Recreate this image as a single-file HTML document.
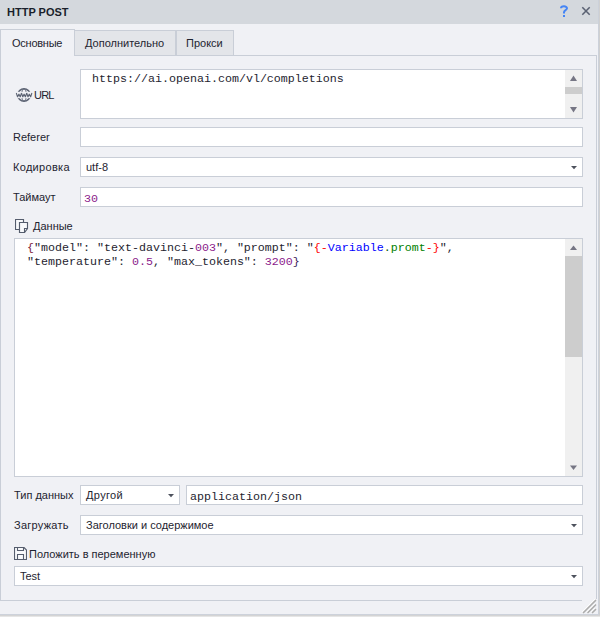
<!DOCTYPE html>
<html><head><meta charset="utf-8">
<style>
*{margin:0;padding:0;box-sizing:border-box}
html,body{width:600px;height:617px;overflow:hidden;background:#f0f1f5}
body{position:relative;font-family:"Liberation Sans",sans-serif;font-size:11px;color:#1e2430}
.a{position:absolute}
.t{position:absolute;white-space:nowrap;line-height:13px;height:13px}
.m{font-family:"Liberation Mono",monospace;font-size:11.67px}
.box{position:absolute;background:#fff;border:1px solid #c9ced7}
#title{left:0;top:0;width:599px;height:24px;background:#d4d8dd}
#rb1{left:598px;top:0;width:1px;height:616px;background:#ccd1da}
#rb2{left:599px;top:0;width:1px;height:617px;background:#d0d0d0}
#bb{left:0;top:614px;width:599px;height:1px;background:#cdd2db}
#bb1{left:0;top:615px;width:600px;height:1px;background:#d4d4d4}
#bb2{left:0;top:616px;width:600px;height:1px;background:#e6e6e6}
.tab{position:absolute;top:30px;height:25px;background:#e3e5e9;border:1px solid #c9ced7;border-bottom:none}
#panel{left:0;top:55px;width:597px;height:546px;border:1px solid #c9ced7;border-right:1px solid #c9ced7}
.sb{position:absolute;background:#f0f0f0}
.thumb{position:absolute;background:#cdcdcd}
.arr{position:absolute;width:0;height:0}
</style></head><body>
<div class="a" id="title"></div>
<div class="t" style="left:7px;top:6px;font-weight:bold;color:#1a1f2b">HTTP POST</div>
<svg class="a" style="left:558px;top:4px" width="12" height="14" viewBox="0 0 12 14"><path d="M3 4.2 C3 1.8 9 1.5 9 4.3 C9 6.1 6 6.2 6 8.2 V9.6" fill="none" stroke="#4585f5" stroke-width="2"/><rect x="5" y="11" width="2" height="2" fill="#4585f5"/></svg>
<svg class="a" style="left:580px;top:5px" width="12" height="12" viewBox="0 0 12 12"><path d="M2.3 2.3 L9.7 9.7 M9.7 2.3 L2.3 9.7" stroke="#5a6172" stroke-width="1.55"/></svg>

<div class="a" id="panel"></div>
<div class="tab" style="left:74px;width:102px"></div>
<div class="tab" style="left:176px;width:58px"></div>
<div class="a" style="left:0;top:29px;width:75px;height:27px;background:#f0f1f5;border:1px solid #c9ced7;border-bottom:none"></div>
<div class="t" style="left:12px;top:37px;letter-spacing:-0.25px">Основные</div>
<div class="t" style="left:85px;top:37px">Дополнительно</div>
<div class="t" style="left:186px;top:37px">Прокси</div>

<!-- URL -->
<svg class="a" style="left:14px;top:86px" width="20" height="18" viewBox="0 0 20 18"><circle cx="10" cy="9" r="6.2" fill="none" stroke="#5f6676" stroke-width="1.5"/><ellipse cx="10" cy="9" rx="2.4" ry="6.2" fill="none" stroke="#5f6676" stroke-width="1"/><rect x="0" y="5.8" width="20" height="6.4" fill="#f0f1f5"/><path d="M2.30 7 L3.60 11 L4.90 8 L6.20 11 L7.50 7 M7.50 7 L8.80 11 L10.10 8 L11.40 11 L12.70 7 M12.70 7 L14.00 11 L15.30 8 L16.60 11 L17.90 7 " fill="none" stroke="#5f6676" stroke-width="1.1" stroke-linejoin="bevel"/></svg>
<div class="t" style="left:34px;top:89px;letter-spacing:-0.8px">URL</div>
<div class="box" style="left:80px;top:69px;width:503px;height:50px"></div>
<div class="t m" style="left:92px;top:73px">https://ai.openai.com/vl/completions</div>
<div class="sb" style="left:565px;top:70px;width:17px;height:48px"></div>
<div class="thumb" style="left:565px;top:87px;width:17px;height:7px"></div>
<svg class="a" style="left:570px;top:75px" width="7" height="6"><path d="M0 6 L3.5 0.5 L7 6Z" fill="#767684"/></svg>
<svg class="a" style="left:570px;top:107px" width="7" height="6"><path d="M0 0 L3.5 5.5 L7 0Z" fill="#767684"/></svg>

<!-- Referer -->
<div class="t" style="left:13px;top:131px">Referer</div>
<div class="box" style="left:80px;top:127px;width:503px;height:20px"></div>

<!-- Кодировка -->
<div class="t" style="left:13px;top:161px;letter-spacing:0.3px">Кодировка</div>
<div class="box" style="left:80px;top:157px;width:503px;height:20px"></div>
<div class="t" style="left:86px;top:161px">utf-8</div>
<svg class="a" style="left:571px;top:166px" width="6" height="4"><path d="M0 0 H6 L3 3.3Z" fill="#4d525d"/></svg>

<!-- Таймаут -->
<div class="t" style="left:13px;top:191px">Таймаут</div>
<div class="box" style="left:80px;top:187px;width:503px;height:20px"></div>
<div class="t m" style="left:84px;top:193px;color:#8b1a8b">30</div>

<!-- Данные -->
<svg class="a" style="left:15px;top:219px" width="14" height="14" viewBox="0 0 14 14"><path d="M0.5 0.5 H8.5 V10.5 H0.5Z" fill="#f8f9fb" stroke="#555d6d" stroke-width="1.15"/><path d="M4.5 3.5 H12.5 V9.5 L9.5 13.5 H4.5Z" fill="#f8f9fb" stroke="#555d6d" stroke-width="1.15"/><path d="M9.5 13.5 V9.5 H12.5" fill="none" stroke="#555d6d" stroke-width="1.1"/></svg>
<div class="t" style="left:33px;top:220px">Данные</div>
<div class="box" style="left:14px;top:238px;width:569px;height:239px"></div>
<div class="t m" style="left:27px;top:241px;line-height:14px;height:28px"><span style="color:#7a1a3a">{</span>"model": "text-davinci-<span style="color:#8b1a8b">003</span>", "prompt": "<span style="color:#f00">{-</span><span style="color:#00f">Variable</span><span style="color:#0a5a0a">.</span><span style="color:#008000">promt</span><span style="color:#f00">-}</span>",<br>"temperature": <span style="color:#8b1a8b">0.5</span>, "max_tokens": <span style="color:#8b1a8b">3200</span><span style="color:#3a1a5a">}</span></div>
<div class="sb" style="left:565px;top:239px;width:17px;height:237px"></div>
<div class="thumb" style="left:565px;top:256px;width:17px;height:101px"></div>
<svg class="a" style="left:570px;top:245px" width="7" height="6"><path d="M0 5 L3.5 0.5 L7 5Z" fill="#767684"/></svg>
<svg class="a" style="left:570px;top:465px" width="7" height="6"><path d="M0 0.5 L3.5 5 L7 0.5Z" fill="#767684"/></svg>

<!-- Тип данных -->
<div class="t" style="left:14px;top:489px">Тип данных</div>
<div class="box" style="left:80px;top:485px;width:100px;height:20px"></div>
<div class="t" style="left:86px;top:489px;letter-spacing:0.35px">Другой</div>
<svg class="a" style="left:168px;top:494px" width="6" height="4"><path d="M0 0 H6 L3 3.3Z" fill="#4d525d"/></svg>
<div class="box" style="left:186px;top:485px;width:397px;height:20px"></div>
<div class="t m" style="left:190px;top:491px">application/json</div>

<!-- Загружать -->
<div class="t" style="left:14px;top:519px;letter-spacing:0.25px">Загружать</div>
<div class="box" style="left:80px;top:515px;width:503px;height:20px"></div>
<div class="t" style="left:86px;top:519px">Заголовки и содержимое</div>
<svg class="a" style="left:571px;top:524px" width="6" height="4"><path d="M0 0 H6 L3 3.3Z" fill="#4d525d"/></svg>

<!-- Положить -->
<svg class="a" style="left:14px;top:547px" width="13" height="13" viewBox="0 0 13 13"><path d="M0.5 0.5 H10 L12.5 3 V12.5 H0.5Z" fill="#f8f9fb" stroke="#555d6d" stroke-width="1.15"/><path d="M3.5 0.5 V3.5 H9.5 V0.5 M3.5 12.5 V7.5 H9.5 V12.5" fill="none" stroke="#555d6d" stroke-width="1.1"/></svg>
<div class="t" style="left:29px;top:548px">Положить в переменную</div>
<div class="box" style="left:14px;top:566px;width:569px;height:20px"></div>
<div class="t" style="left:20px;top:570px">Test</div>
<svg class="a" style="left:571px;top:575px" width="6" height="4"><path d="M0 0 H6 L3 3.3Z" fill="#4d525d"/></svg>

<!-- window borders -->
<div class="a" id="rb1"></div>
<div class="a" id="rb2"></div>
<div class="a" id="bb"></div>
<div class="a" id="bb1"></div>
<div class="a" id="bb2"></div>
<svg class="a" style="left:582px;top:599px" width="15" height="15" viewBox="0 0 15 15"><rect width="15" height="15" fill="#f0f1f5"/><path d="M0.8 12.8 L12.8 0.8 M5.3 12.8 L12.8 5.3 M9.8 12.8 L12.8 9.8" stroke="#fff" stroke-width="1.4" stroke-linecap="round"/><path d="M1.5 13.5 L13.5 1.5 M6 13.5 L13.5 6 M10.5 13.5 L13.5 10.5" stroke="#adadad" stroke-width="1.7" stroke-linecap="round"/></svg>
</body></html>
